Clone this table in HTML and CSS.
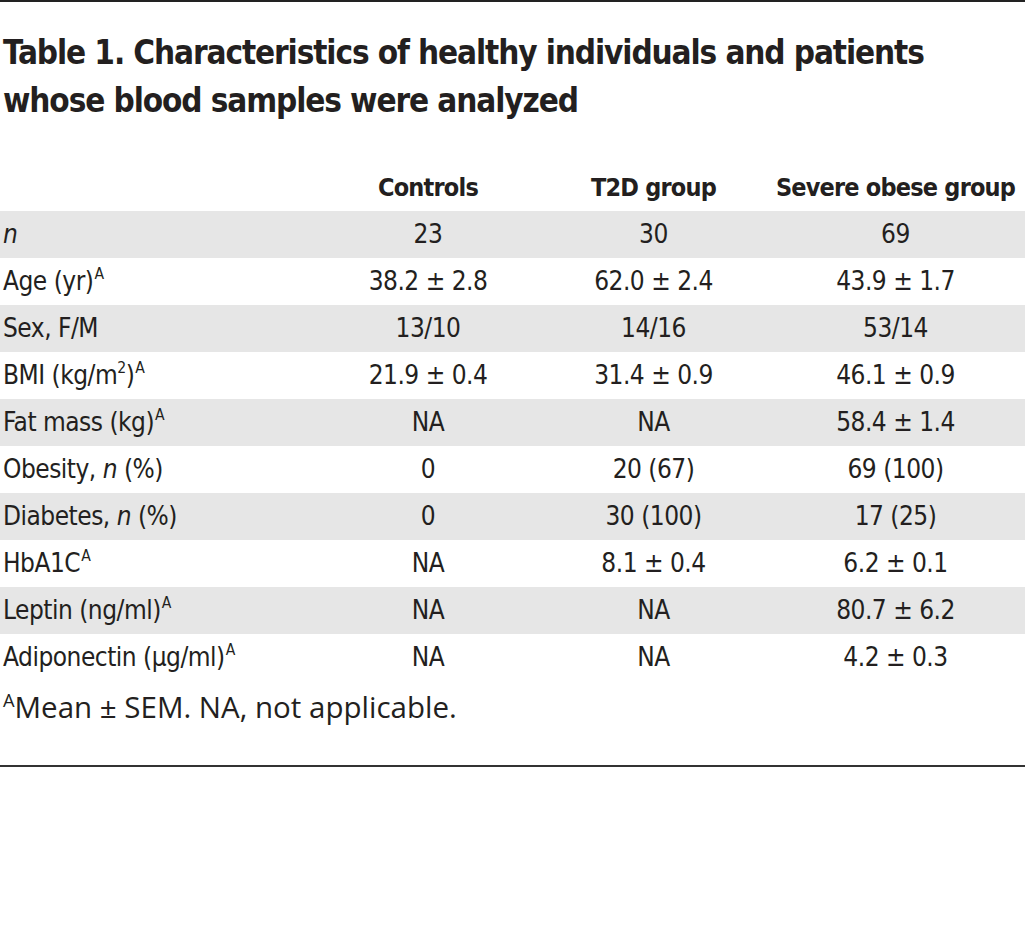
FILE: index.html
```html
<!DOCTYPE html>
<html lang="en">
<head>
<meta charset="utf-8">
<title>Table 1</title>
<link rel="stylesheet" href="styles.css">
</head>
<body>
<div class="figure">
  <h1 class="title">Table 1. Characteristics of healthy individuals and patients whose blood samples were analyzed</h1>
  <table class="data">
    <colgroup>
      <col class="c-label"><col class="c-1"><col class="c-2"><col class="c-3">
    </colgroup>
    <thead>
      <tr><th></th><th>Controls</th><th>T2D group</th><th>Severe obese group</th></tr>
    </thead>
    <tbody>
      <tr class="shade"><td><i>n</i></td><td>23</td><td>30</td><td>69</td></tr>
      <tr><td>Age (yr)<sup>A</sup></td><td>38.2 ± 2.8</td><td>62.0 ± 2.4</td><td>43.9 ± 1.7</td></tr>
      <tr class="shade"><td>Sex, F/M</td><td>13/10</td><td>14/16</td><td>53/14</td></tr>
      <tr><td>BMI (kg/m<sup class="sq">2</sup>)<sup>A</sup></td><td>21.9 ± 0.4</td><td>31.4 ± 0.9</td><td>46.1 ± 0.9</td></tr>
      <tr class="shade"><td>Fat mass (kg)<sup>A</sup></td><td>NA</td><td>NA</td><td>58.4 ± 1.4</td></tr>
      <tr><td>Obesity, <i>n</i> (%)</td><td>0</td><td>20 (67)</td><td>69 (100)</td></tr>
      <tr class="shade"><td>Diabetes, <i>n</i> (%)</td><td>0</td><td>30 (100)</td><td>17 (25)</td></tr>
      <tr><td>HbA1C<sup>A</sup></td><td>NA</td><td>8.1 ± 0.4</td><td>6.2 ± 0.1</td></tr>
      <tr class="shade"><td>Leptin (ng/ml)<sup>A</sup></td><td>NA</td><td>NA</td><td>80.7 ± 6.2</td></tr>
      <tr><td>Adiponectin (<span class="mu">μ</span>g/ml)<sup>A</sup></td><td>NA</td><td>NA</td><td>4.2 ± 0.3</td></tr>
    </tbody>
  </table>
  <p class="note"><sup>A</sup>Mean ± SEM. NA, not applicable.</p>
</div>
</body>
</html>
```

FILE: styles.css
```css
html, body {
  margin: 0;
  padding: 0;
  background: #ffffff;
}

.figure {
  width: 1025px;
  border-top: 2px solid #222222;
  border-bottom: 2px solid #333333;
  color: #231f20;
}

.title {
  width: 935px;
  margin: 0;
  padding: 27px 0 0 3px;
  font-family: "DejaVu Sans Condensed", "DejaVu Sans", sans-serif;
  font-stretch: condensed;
  font-weight: bold;
  font-size: 33px;
  letter-spacing: -1.1px;
  line-height: 48px;
  color: #231f20;
}

.data {
  margin-top: 39px;
  width: 1025px;
  border-collapse: collapse;
  table-layout: fixed;
  font-family: "DejaVu Sans Condensed", "DejaVu Sans", sans-serif;
  font-stretch: condensed;
}

.c-label { width: 315px; }
.c-1 { width: 226px; }
.c-2 { width: 225px; }
.c-3 { width: 259px; }

.data th {
  height: 47px;
  padding: 0;
  font-size: 25px;
  letter-spacing: -0.8px;
  line-height: 47px;
  font-weight: bold;
  text-align: center;
  vertical-align: top;
  white-space: nowrap;
}

.data td {
  height: 47px;
  padding: 0;
  font-size: 26px;
  letter-spacing: -0.5px;
  line-height: 47px;
  text-align: center;
  vertical-align: top;
  white-space: nowrap;
}

.data td:first-child {
  text-align: left;
  padding-left: 3px;
}

.data tr.shade td {
  background: #e6e6e6;
}

.data sup {
  font-size: 0.6em;
  line-height: 0;
  vertical-align: 0.7em;
  margin-left: 1px;
}

.data sup.sq {
  margin-left: 0;
}

.note {
  margin: 6px 0 38px 0;
  padding-left: 3px;
  font-family: "Open Sans", "Noto Sans", sans-serif;
  font-size: 29.5px;
  line-height: 40px;
  color: #231f20;
}

.note sup {
  font-size: 0.62em;
  line-height: 0;
  vertical-align: 0.6em;
}
```
